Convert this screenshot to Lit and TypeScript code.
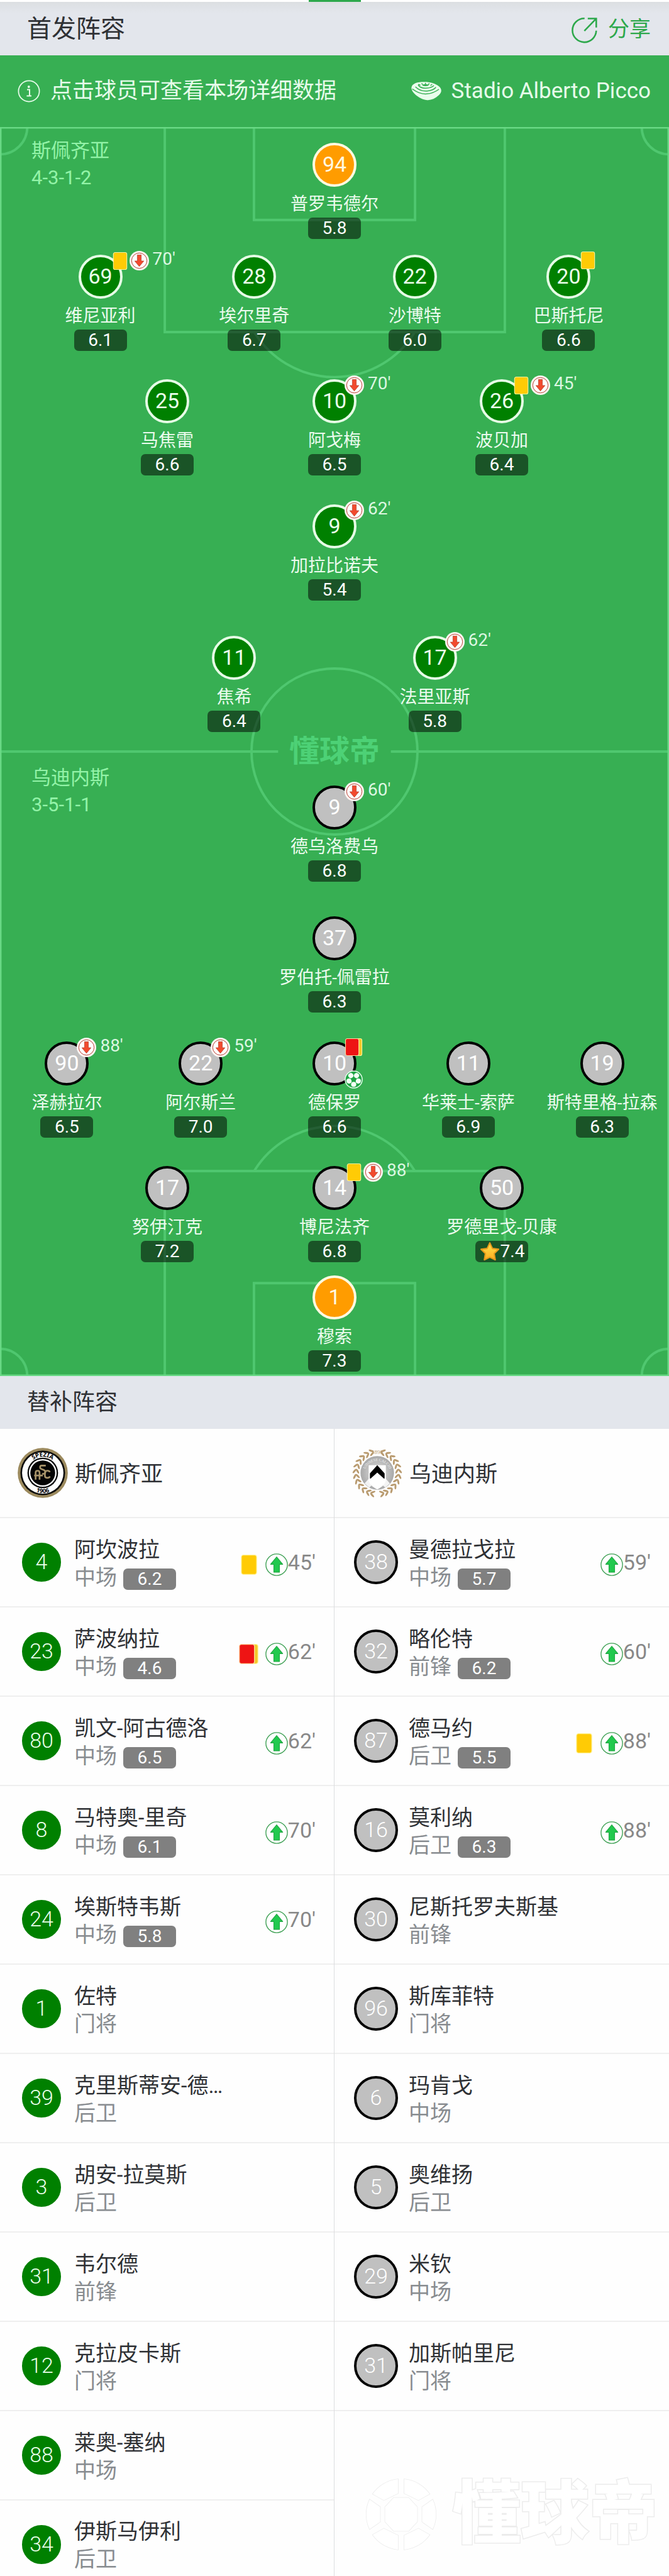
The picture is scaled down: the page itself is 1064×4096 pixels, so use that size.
import { LitElement, html, svg, css, nothing } from "lit";
import { customElement, property } from "lit/decorators.js";
import { classMap } from "lit/directives/class-map.js";

type Card = "yellow" | "second";
type Kit = "home" | "away" | "keeper";

interface Starter {
  no: number;
  name: string;
  rating: string;
  kit?: Kit;
  card?: Card;
  off?: string;
  goal?: boolean;
  best?: boolean;
}

interface Reserve {
  no: number;
  name: string;
  role: string;
  rating?: string;
  card?: Card;
  on?: string;
}

interface Team {
  name: string;
  formation: string;
  side: "home" | "away";
  lines: Starter[][];
  bench: Reserve[];
}

const HOME: Team = {
  name: "斯佩齐亚",
  formation: "4-3-1-2",
  side: "home",
  lines: [
    [{ no: 94, name: "普罗韦德尔", rating: "5.8", kit: "keeper" }],
    [
      { no: 69, name: "维尼亚利", rating: "6.1", card: "yellow", off: "70'" },
      { no: 28, name: "埃尔里奇", rating: "6.7" },
      { no: 22, name: "沙博特", rating: "6.0" },
      { no: 20, name: "巴斯托尼", rating: "6.6", card: "yellow" },
    ],
    [
      { no: 25, name: "马焦雷", rating: "6.6" },
      { no: 10, name: "阿戈梅", rating: "6.5", off: "70'" },
      { no: 26, name: "波贝加", rating: "6.4", card: "yellow", off: "45'" },
    ],
    [{ no: 9, name: "加拉比诺夫", rating: "5.4", off: "62'" }],
    [
      { no: 11, name: "焦希", rating: "6.4" },
      { no: 17, name: "法里亚斯", rating: "5.8", off: "62'" },
    ],
  ],
  bench: [
    { no: 4, name: "阿坎波拉", role: "中场", rating: "6.2", card: "yellow", on: "45'" },
    { no: 23, name: "萨波纳拉", role: "中场", rating: "4.6", card: "second", on: "62'" },
    { no: 80, name: "凯文-阿古德洛", role: "中场", rating: "6.5", on: "62'" },
    { no: 8, name: "马特奥-里奇", role: "中场", rating: "6.1", on: "70'" },
    { no: 24, name: "埃斯特韦斯", role: "中场", rating: "5.8", on: "70'" },
    { no: 1, name: "佐特", role: "门将" },
    { no: 39, name: "克里斯蒂安-德…", role: "后卫" },
    { no: 3, name: "胡安-拉莫斯", role: "后卫" },
    { no: 31, name: "韦尔德", role: "前锋" },
    { no: 12, name: "克拉皮卡斯", role: "门将" },
    { no: 88, name: "莱奥-塞纳", role: "中场" },
    { no: 34, name: "伊斯马伊利", role: "后卫" },
  ],
};

const AWAY: Team = {
  name: "乌迪内斯",
  formation: "3-5-1-1",
  side: "away",
  lines: [
    [{ no: 9, name: "德乌洛费乌", rating: "6.8", off: "60'" }],
    [{ no: 37, name: "罗伯托-佩雷拉", rating: "6.3" }],
    [
      { no: 90, name: "泽赫拉尔", rating: "6.5", off: "88'" },
      { no: 22, name: "阿尔斯兰", rating: "7.0", off: "59'" },
      { no: 10, name: "德保罗", rating: "6.6", card: "second", goal: true },
      { no: 11, name: "华莱士-索萨", rating: "6.9" },
      { no: 19, name: "斯特里格-拉森", rating: "6.3" },
    ],
    [
      { no: 17, name: "努伊汀克", rating: "7.2" },
      { no: 14, name: "博尼法齐", rating: "6.8", card: "yellow", off: "88'" },
      { no: 50, name: "罗德里戈-贝康", rating: "7.4", best: true },
    ],
    [{ no: 1, name: "穆索", rating: "7.3", kit: "keeper" }],
  ],
  bench: [
    { no: 38, name: "曼德拉戈拉", role: "中场", rating: "5.7", on: "59'" },
    { no: 32, name: "略伦特", role: "前锋", rating: "6.2", on: "60'" },
    { no: 87, name: "德马约", role: "后卫", rating: "5.5", card: "yellow", on: "88'" },
    { no: 16, name: "莫利纳", role: "后卫", rating: "6.3", on: "88'" },
    { no: 30, name: "尼斯托罗夫斯基", role: "前锋" },
    { no: 96, name: "斯库菲特", role: "门将" },
    { no: 6, name: "玛肯戈", role: "中场" },
    { no: 5, name: "奥维扬", role: "后卫" },
    { no: 29, name: "米钦", role: "中场" },
    { no: 31, name: "加斯帕里尼", role: "门将" },
  ],
};

const ARROW = "M16 6.5 L23.5 15.5 H19.2 V25.5 H12.8 V15.5 H8.5 Z";

const shareIcon = html`<svg class="share-icon" viewBox="0 0 130 134" fill="none" stroke="#2da84b" stroke-width="8" aria-hidden="true">
  <path d="M64 7 A59 59 0 1 0 122 68" />
  <path d="M63 69 L121 9 M80 8 H122 V52" />
</svg>`;

const infoIcon = html`<svg class="info-icon" viewBox="0 0 36 36" aria-hidden="true">
  <circle cx="18" cy="18" r="16.6" fill="none" stroke="#e6fbea" stroke-width="1.8" />
  <circle cx="17.8" cy="11" r="1.9" fill="#e6fbea" />
  <path d="M15 15.6 H19 V25.4 M14.4 25.6 H22" fill="none" stroke="#e6fbea" stroke-width="2" />
</svg>`;

const stadiumIcon = html`<svg class="stadium-icon" viewBox="0 0 144 90" aria-hidden="true">
  <path d="M1 30 C2 8 30 1 62 1 C92 1 114 8 132 22 C148 34 146 52 132 64 C112 82 92 90 72 87 C46 84 4 58 1 30 Z" fill="#e9fdec" />
  <g fill="none" stroke="#37af53" stroke-width="4.5">
    <path d="M5 34 C26 48 46 60 74 58 C98 56 116 48 132 36" />
    <path d="M20 24 C34 38 52 46 76 44 C96 42 110 36 118 26" />
    <path d="M33 15 C40 26 56 32 76 30 C92 29 102 24 108 18" />
    <path d="M34 12 L44 17 M50 7 L54 14 M68 5 V12 M86 7 L82 15 M100 12 L92 18" />
  </g>
  <ellipse cx="68" cy="16" rx="15" ry="5" fill="#37af53" />
</svg>`;

const subOff = html`<svg class="icon-sub" viewBox="0 0 32 32" aria-label="换下">
  <circle cx="16" cy="16" r="16" fill="#fdf6f2" />
  <circle cx="16" cy="16" r="12.6" fill="#fff" stroke="#b6362b" stroke-width="1" />
  <path d="${ARROW}" transform="rotate(180 16 16)" fill="#f24a2e" stroke="#b8402c" stroke-width="0.8" />
</svg>`;

const subOn = html`<svg class="icon-sub" viewBox="0 0 32 32" aria-label="换上">
  <circle cx="16" cy="16" r="15.2" fill="#fff" stroke="#3c9f52" stroke-width="1.2" />
  <path d="M16 5 L24.6 15.4 H20 V26.6 H12 V15.4 H7.4 Z" fill="#22c94e" stroke="#22a844" stroke-width="1" stroke-linejoin="round" />
</svg>`;

const cardIcon = (card: Card) =>
  card === "yellow"
    ? html`<svg class="icon-card" viewBox="0 0 32 32" aria-label="黄牌">
        <rect x="4.6" y="1.6" width="22.8" height="28.8" rx="3" fill="#ffcb05" stroke="#fff29a" stroke-width="1.2" />
      </svg>`
    : html`<svg class="icon-card" viewBox="0 0 32 32" aria-label="两黄变红">
        <rect x="8" y="1.6" width="21.4" height="28.8" rx="3" fill="#f3c928" stroke="#fff29a" stroke-width="1.2" />
        <rect x="1.6" y="1.6" width="22.6" height="28.8" rx="3" fill="#ee1414" stroke="#ffd9a0" stroke-width="1.2" />
      </svg>`;

const goalIcon = html`<svg class="icon-goal" viewBox="0 0 32 32" aria-label="进球">
  <circle cx="16" cy="16" r="15" fill="#1fa545" stroke="#eafff0" stroke-width="1.6" />
  <g fill="#f4fff6">
    ${[0, 72, 144, 216, 288].map(
      (a) => svg`<circle transform="rotate(${a + 36} 16 16)" cx="16" cy="7.4" r="4.5" />`
    )}
  </g>
  <path d="M16 12 L19.8 14.8 L18.4 19.2 H13.6 L12.2 14.8 Z" fill="#1fa545" />
</svg>`;

const starIcon = html`<svg class="icon-star" viewBox="0 0 32 32" aria-label="全场最佳">
  <defs>
    <linearGradient id="star" x1="0" y1="0" x2="0" y2="1">
      <stop offset="0" stop-color="#ffe24d" />
      <stop offset="1" stop-color="#ffae1f" />
    </linearGradient>
  </defs>
  <path d="M16 3 L20 11.4 L29.2 12.6 L22.6 19 L24.2 28.4 L16 24.6 L7.8 28.4 L9.4 19 L2.8 12.6 L12 11.4 Z"
    fill="url(#star)" stroke="#e79a1c" stroke-width="2" stroke-linejoin="round" />
</svg>`;

const speziaCrest = html`<svg class="crest" viewBox="0 0 243 243" aria-label="斯佩齐亚队徽">
  <defs>
    <path id="sp-top" d="M43 121.5 A78.5 78.5 0 0 1 200 121.5" />
    <path id="sp-bottom" d="M24 121.5 A97.5 97.5 0 0 0 219 121.5" />
  </defs>
  <circle cx="121.5" cy="121.5" r="121" fill="#9c8a5e" />
  <circle cx="121.5" cy="121.5" r="108" fill="#0a0a0a" />
  <circle cx="121.5" cy="121.5" r="100" fill="#fff" />
  <circle cx="121.5" cy="121.5" r="74" fill="#0a0a0a" />
  <circle cx="121.5" cy="121.5" r="67" fill="#fff" />
  <circle cx="121.5" cy="121.5" r="60" fill="#050505" />
  <text class="spezia-text"><textPath href="#sp-top" startOffset="50%" text-anchor="middle">SPEZIA</textPath></text>
  <text class="spezia-text"><textPath href="#sp-bottom" startOffset="50%" text-anchor="middle">1906</textPath></text>
  <g fill="none" stroke="#a8946a" stroke-width="8">
    <path d="M136 86 H116 C106 86 106 101 116 103 L126 107 C138 112 136 126 124 126 H118" />
    <path d="M87 154 V120 C87 108 106 108 106 120 V154 M80 134 H122" />
    <path d="M156 118 C152 108 132 108 132 122 V136 C132 148 152 148 156 138" />
  </g>
</svg>`;

const leaves = [18, 32, 46, 60, 74, 88, 102, 116, 130, 144, 158, 170];

const udineseCrest = html`<svg class="crest" viewBox="0 0 243 243" aria-label="乌迪内斯队徽">
  <defs>
    <radialGradient id="ud-disc">
      <stop offset="0" stop-color="#e2e2e2" />
      <stop offset="1" stop-color="#a9a9a9" />
    </radialGradient>
    <path id="ud-arc" d="M58 128 A64 64 0 0 1 186 128" />
  </defs>
  <g fill="#b99b70">
    ${[1, -1].map(
      (flip) => svg`<g transform="translate(121.5 121.5) scale(${flip} 1)">
        ${leaves.map(
          (a) => svg`<g transform="rotate(${a}) translate(0 -103)">
            <ellipse cx="0" cy="-9" rx="13" ry="4.6" transform="rotate(-38)" />
            <ellipse cx="0" cy="9" rx="13" ry="4.6" transform="rotate(32)" />
          </g>`
        )}
      </g>`
    )}
  </g>
  <text class="udinese-year" x="121.5" y="30" text-anchor="middle">1896</text>
  <circle cx="121.5" cy="121.5" r="81" fill="url(#ud-disc)" />
  <text class="udinese-text"><textPath href="#ud-arc" startOffset="50%" text-anchor="middle">UDINESE CALCIO</textPath></text>
  <path d="M80 84 H163 V150 C163 176 142 190 121.5 201 C101 190 80 176 80 150 Z" fill="#fff" />
  <path d="M121.5 84 L157 124 V152 L121.5 120 L86 152 V124 Z" fill="#000" />
  <path d="M60 172 L84 146 L121.5 178 L159 146 L183 172 L160 192 L121.5 158 L83 192 Z" fill="#fff" opacity="0.85" />
</svg>`;

const ballMark = html`<svg class="ball-mark" viewBox="0 0 116 116" fill="#fff" stroke="#ececec" stroke-width="1.6" aria-hidden="true">
  <path d="M46 31 H70 L84 46 V70 L70 85 H46 L32 70 V46 Z" />
  <path d="M53 1 V24 L30 35 L12 25 A57 57 0 0 1 53 1 Z" />
  <path d="M63 1 V24 L86 35 L104 25 A57 57 0 0 0 63 1 Z" />
  <path d="M53 115 V92 L30 81 L12 91 A57 57 0 0 0 53 115 Z" />
  <path d="M63 115 V92 L86 81 L104 91 A57 57 0 0 1 63 115 Z" />
  <path d="M7 34 L24 46 V70 L7 82 A57 57 0 0 1 7 34 Z" />
  <path d="M109 34 L92 46 V70 L109 82 A57 57 0 0 0 109 34 Z" />
</svg>`;

const tokenStyles = css`
  .token {
    box-sizing: border-box;
    width: 70px;
    height: 70px;
    border: 4px solid #e6fde6;
    border-radius: 50%;
    background: #008000;
    color: #eaffea;
    font-size: 34px;
    line-height: 60px;
    text-align: center;
    flex: none;
  }
  .token.away {
    background: #c0c0c0;
    border-color: #000;
    color: #fff;
  }
  .token.keeper {
    background: #ff9c00;
    border-color: #fff9e0;
    color: #fff9e0;
  }
  .rating {
    display: flex;
    align-items: center;
    justify-content: center;
    box-sizing: border-box;
    width: 84px;
    height: 34px;
    border-radius: 7px;
    color: #fff;
    font-size: 28px;
    line-height: 32px;
  }
  button {
    appearance: none;
    border: 0;
    margin: 0;
    padding: 0;
    background: none;
    font: inherit;
    color: inherit;
    cursor: pointer;
  }
`;

@customElement("pitch-player")
export class PitchPlayer extends LitElement {
  @property({ attribute: false }) player!: Starter;
  @property() side: "home" | "away" = "home";

  static styles = [
    tokenStyles,
    css`
      :host {
        display: flex;
        justify-content: center;
      }
      .player {
        position: relative;
        display: flex;
        flex-direction: column;
        align-items: center;
        width: 70px;
      }
      .name {
        margin: 8px 0 1px;
        font-size: 28px;
        line-height: 40px;
        color: #ebfbee;
        white-space: nowrap;
      }
      .rating {
        background: rgba(0, 0, 0, 0.52);
      }
      .badges {
        position: absolute;
        top: -6px;
        left: 51px;
        display: flex;
        align-items: center;
        font-size: 28px;
        line-height: 30px;
        color: #dcf7e1;
      }
      .goals {
        position: absolute;
        top: 46px;
        left: 51px;
        display: flex;
      }
      .minute {
        margin: -6px 0 0 6px;
      }
      .icon-sub {
        width: 31px;
        height: 31px;
      }
      .icon-card {
        width: 30px;
        height: 30px;
      }
      .icon-goal {
        width: 29px;
        height: 29px;
      }
      .icon-star {
        width: 34px;
        height: 34px;
      }
    `,
  ];

  render() {
    const p = this.player;
    const kit = p.kit ?? this.side;
    return html`<button class="player" type="button">
      <span class=${classMap({ token: true, [kit]: true })}>${p.no}</span>
      <span class="name">${p.name}</span>
      <span class="rating">${p.best ? starIcon : nothing}${p.rating}</span>
      <span class="badges">
        ${p.card ? cardIcon(p.card) : nothing}
        ${p.off ? html`${subOff}<span class="minute">${p.off}</span>` : nothing}
      </span>
      ${p.goal ? html`<span class="goals">${goalIcon}</span>` : nothing}
    </button>`;
  }
}

@customElement("lineup-pitch")
export class LineupPitch extends LitElement {
  static styles = css`
    :host {
      display: block;
      position: relative;
      background: #37af53;
    }
    .markings {
      position: absolute;
      inset: 0;
      width: 100%;
      height: 100%;
    }
    .brand {
      position: absolute;
      inset: 0;
      display: flex;
      align-items: center;
      justify-content: center;
      font-size: 48px;
      font-weight: 700;
      line-height: 48px;
      color: #4dd176;
    }
    .half {
      position: relative;
      display: grid;
    }
    .half.home {
      grid-template-rows: 178px 198px 199px 209px 184px;
      padding-top: 25px;
    }
    .half.away {
      grid-template-rows: 208px 199px 198px 174px 160px;
      padding-top: 54px;
    }
    .line {
      display: grid;
      grid-auto-flow: column;
      grid-auto-columns: minmax(0, 1fr);
      align-items: start;
    }
    .line.of-2 {
      padding: 0 20%;
    }
    .line.of-3 {
      padding: 0 12.5%;
    }
    .line.of-4 {
      grid-template-columns: 23fr 23fr 1fr 23fr 23fr;
      padding: 0 3.5%;
    }
    .line.of-4 > :nth-child(3) {
      grid-column: 4;
    }
    .line.of-4 > :nth-child(4) {
      grid-column: 5;
    }
    .team {
      position: absolute;
      top: 16px;
      left: 50px;
      font-size: 31px;
      line-height: 43px;
      color: #93f3a8;
    }
    .away .team {
      top: 20px;
    }
    .team p {
      margin: 0;
    }
  `;

  private half(team: Team) {
    return html`<section class="half ${team.side}">
      <div class="team">
        <p>${team.name}</p>
        <p>${team.formation}</p>
      </div>
      ${team.lines.map(
        (line) => html`<div class="line of-${line.length}">
          ${line.map((p) => html`<pitch-player .player=${p} side=${team.side}></pitch-player>`)}
        </div>`
      )}
    </section>`;
  }

  render() {
    const end = svg`
      <path d="M266 0 V331 H815 V0 M410 0 V150 H670 V0" />
      <path d="M411 332 A152 152 0 0 0 669 332" />
      <path d="M44 0 A44 44 0 0 1 0 44 M1036 0 A44 44 0 0 0 1080 44" />`;
    return html`<svg class="markings" viewBox="0 0 1080 2016" preserveAspectRatio="none" fill="none" stroke="#4fc76f" stroke-width="4" aria-hidden="true">
        ${end}
        <g transform="translate(0 2016) scale(1 -1)">${end}</g>
        <circle cx="540" cy="1008" r="134" />
        <path d="M0 1008 H449 M631 1008 H1080" />
        <rect x="1" y="1" width="1078" height="2014" stroke="#69d985" stroke-width="3" />
      </svg>
      <div class="brand">懂球帝</div>
      ${this.half(HOME)} ${this.half(AWAY)}`;
  }
}

@customElement("team-bench")
export class TeamBench extends LitElement {
  @property({ attribute: false }) team!: Team;

  static styles = [
    tokenStyles,
    css`
      :host {
        display: flex;
        flex-direction: column;
        min-width: 0;
      }
      .club {
        display: flex;
        align-items: center;
        gap: 11px;
        box-sizing: border-box;
        height: 142px;
        padding-left: 28px;
        border-bottom: 2px solid #efefef;
        font-size: 35px;
        color: #2f3135;
      }
      h3 {
        margin: 0 0 4px;
        font: inherit;
      }
      .crest {
        width: 80px;
        height: 80px;
      }
      .spezia-text {
        font: bold 29px "Noto Sans", sans-serif;
      }
      .udinese-year {
        font: 27px "Liberation Serif", serif;
        fill: #b99b70;
      }
      .udinese-text {
        font: 18px "Liberation Serif", serif;
        fill: #f4f4f4;
      }
      ul {
        list-style: none;
        margin: 0;
        padding: 0;
      }
      li {
        border-bottom: 2px solid #efefef;
      }
      :host([side="home"]) li:last-child {
        border-bottom: 0;
      }
      .row {
        display: flex;
        align-items: center;
        width: 100%;
        height: 140px;
        padding: 0 29px 0 31px;
        text-align: left;
      }
      .token {
        font-weight: 300;
      }
      .token.home {
        border-color: #fff;
      }
      .who {
        flex: 1;
        min-width: 0;
        margin: 4px 0 0 17px;
        font-size: 34px;
        line-height: 44px;
        color: #2f3135;
        white-space: nowrap;
      }
      .who span {
        display: block;
      }
      .who .role {
        display: flex;
        align-items: center;
        gap: 10px;
        color: #888c90;
      }
      .who .rating {
        display: flex;
        margin-top: 5px;
        background: #808080;
      }
      :host([side="home"]) li:last-child .row {
        height: 120px;
        align-items: flex-start;
        padding-top: 35px;
        box-sizing: border-box;
      }
      :host([side="home"]) li:last-child .who {
        margin-top: -8px;
      }
      .events {
        display: flex;
        align-items: center;
        font-size: 34px;
        line-height: 40px;
        color: #888;
      }
      .icon-card {
        width: 34px;
        height: 34px;
        margin: 7px 9px 0 0;
      }
      .icon-sub {
        width: 36px;
        height: 36px;
        margin-top: 7px;
      }
      .watermark {
        display: flex;
        align-items: center;
        gap: 24px;
        margin: auto 0 0 49px;
        padding-bottom: 38px;
        font-size: 109px;
        line-height: 120px;
        font-weight: 900;
        color: #fff;
        white-space: nowrap;
        -webkit-text-stroke: 3px #ececec;
        paint-order: stroke fill;
      }
      .ball-mark {
        width: 114px;
        height: 114px;
        flex: none;
      }
    `,
  ];

  render() {
    const t = this.team;
    return html`<header class="club">
        ${t.side === "home" ? speziaCrest : udineseCrest}
        <h3>${t.name}</h3>
      </header>
      <ul>
        ${t.bench.map(
          (p) => html`<li>
            <button class="row" type="button">
              <span class="token ${t.side}">${p.no}</span>
              <span class="who">
                <span>${p.name}</span>
                <span class="role">${p.role}${p.rating ? html`<span class="rating">${p.rating}</span>` : nothing}</span>
              </span>
              ${p.on
                ? html`<span class="events">${p.card ? cardIcon(p.card) : nothing}${subOn}<span>${p.on}</span></span>`
                : nothing}
            </button>
          </li>`
        )}
      </ul>
      ${t.side === "away" ? html`<div class="watermark">${ballMark}<span>懂球帝</span></div>` : nothing}`;
  }
}

@customElement("app-root")
export class AppRoot extends LitElement {
  static styles = css`
    :host {
      display: block;
      overflow: hidden;
      background: #fefefe;
      font-family: Roboto, "Noto Sans CJK SC", sans-serif;
      color: #2f3135;
    }
    .tabs {
      display: flex;
      justify-content: center;
      height: 3px;
      background: #fff;
    }
    .tab-mark {
      width: 83px;
      background: #2da84b;
    }
    .bar {
      display: flex;
      align-items: center;
      justify-content: space-between;
      box-sizing: border-box;
      height: 84px;
      padding: 0 29px 0 43px;
      background: #e3e6ec;
    }
    .bar.first {
      height: 85px;
      background: linear-gradient(#dcdfe2, #e3e6ec 18px);
    }
    h2 {
      margin: 0;
      font-size: 36px;
      font-weight: 400;
      line-height: 48px;
    }
    .first h2 {
      font-size: 39px;
    }
    .share {
      display: flex;
      align-items: center;
      gap: 16px;
      border: 0;
      padding: 0;
      background: none;
      font: inherit;
      font-size: 34px;
      line-height: 44px;
      color: #2da84b;
      cursor: pointer;
    }
    .share-icon {
      width: 42px;
      height: 43px;
      margin-top: 5px;
    }
    .notice {
      display: flex;
      align-items: center;
      justify-content: space-between;
      height: 114px;
      padding: 0 29px 0 28px;
      background: #37af53;
      color: #e6fbea;
      font-size: 35px;
      line-height: 48px;
    }
    .notice p {
      display: flex;
      align-items: center;
      gap: 16px;
      margin: 0;
    }
    .info-icon {
      width: 36px;
      height: 36px;
    }
    .stadium-icon {
      width: 48px;
      height: 30px;
    }
    .benches {
      display: grid;
      grid-template-columns: minmax(0, 1fr) minmax(0, 1fr);
    }
    .benches > :first-child {
      border-right: 1px solid #dcdddf;
    }
  `;

  render() {
    return html`<div class="tabs"><span class="tab-mark"></span></div>
      <header class="bar first">
        <h2>首发阵容</h2>
        <button class="share" type="button">${shareIcon}分享</button>
      </header>
      <div class="notice">
        <p>${infoIcon}点击球员可查看本场详细数据</p>
        <p>${stadiumIcon}Stadio Alberto Picco</p>
      </div>
      <lineup-pitch></lineup-pitch>
      <header class="bar"><h2>替补阵容</h2></header>
      <div class="benches">
        <team-bench side="home" .team=${HOME}></team-bench>
        <team-bench side="away" .team=${AWAY}></team-bench>
      </div>`;
  }
}
